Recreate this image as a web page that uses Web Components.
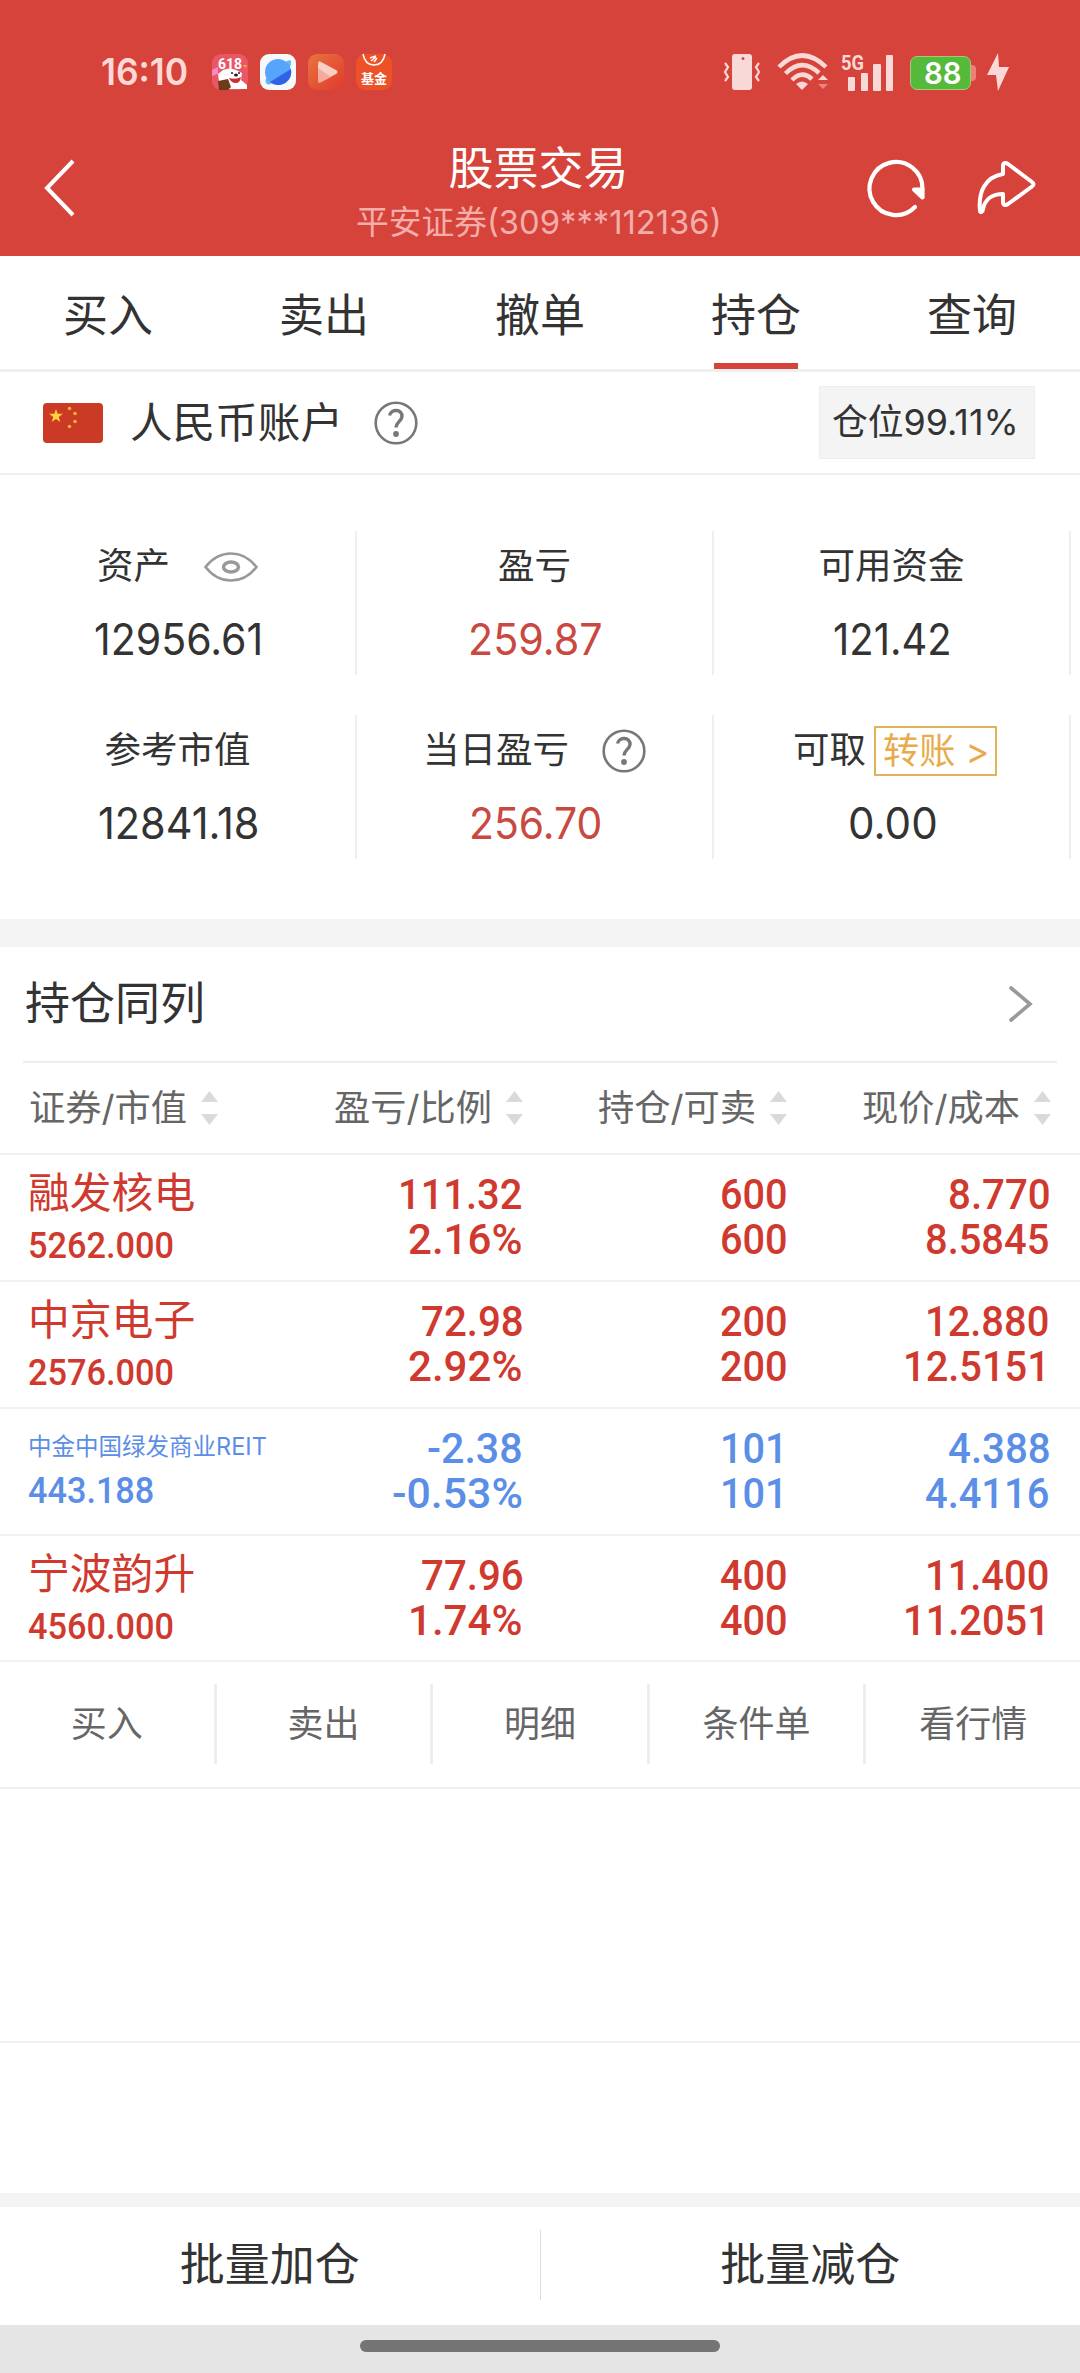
<!DOCTYPE html>
<html lang="zh-CN">
<head>
<meta charset="utf-8">
<title>股票交易</title>
<style>
  body {
    margin: 0;
    background: #fff;
    color: #333;
    font-family: Inter, "Noto Sans CJK SC", sans-serif;
  }
</style>
</head>
<body>
<trade-app></trade-app>

<script>
const define = (name, html, init) => {
  const template = document.createElement('template');
  template.innerHTML = html;
  customElements.define(name, class extends HTMLElement {
    constructor() {
      super();
      this.attachShadow({ mode: 'open' });
      this.shadowRoot.appendChild(template.content.cloneNode(true));
    }

    connectedCallback() {
      if (init) init(this, this.shadowRoot);
    }
  });
};

const ICONS = {
  back: [36, 60, '<path d="M31 3 5 30l26 27" fill="none" stroke="#fff" stroke-width="4"/>'],
  refresh: [60, 60, `<g fill="none" stroke="#fff" stroke-width="4.2" stroke-linecap="round" stroke-linejoin="round">
    <path d="M49 49A26.5 26.5 0 1 1 56.500 31"/><path d="M48 31.500h8.500v8z" fill="#fff"/></g>`],
  share: [62, 56, `<path d="M5 51C3 32 10 17 28 14V6c0-3 2-4 5-2l24 18c2 1.500 2 3 0 4.500L33 44c-3 2-5 1-5-2v-8C18 34 10 39 8 49c0 3-3 4-3 2z"
    fill="none" stroke="#fff" stroke-width="4" stroke-linejoin="round"/>`],
  vibrate: [37, 36, `<path fill="#f9d9d7" fill-rule="evenodd" d="M11 0h14q3 0 3 3v30q0 3-3 3H11q-3 0-3-3V3q0-3 3-3zm8 3a1.500 1.500 0 1 0 0 3a1.500 1.500 0 1 0 0-3z"/>
    <path d="M1 9l3 4-3 5 3 5-3 4M35 9l-3 4 3 5-3 5 3 4" fill="none" stroke="#f9d9d7" stroke-width="2.200"/>`],
  wifi: [52, 36, `<g fill="none" stroke="#f9d9d7" stroke-width="4.500"><path d="M2 13Q25-10 49 13"/><path d="M8.500 19.500Q25 3 42 19"/><path d="M15 26Q25 16 35 25"/></g>
    <path d="M19 30q6-5 12 0l-6 6z" fill="#f9d9d7"/><path d="M41 26l5-5 5 5z" fill="#f9d9d7"/><path d="M41 30h10l-5 5z" fill="#e78680"/>`],
  bars: [52, 37, `<text x="-1" y="15.500" font-size="21" font-weight="700" font-family="Roboto" textLength="23" lengthAdjust="spacingAndGlyphs">5G</text>
    <rect x="6" y="23" width="7" height="14" rx="1"/><rect x="19" y="19" width="7" height="18" rx="1"/><rect x="31" y="10" width="8" height="27" rx="1"/><rect x="44" y="1" width="7" height="36" rx="1"/>`],
  bolt: [22, 38, '<path d="M11 0L0 22h9l2 16 11-24H12z" fill="#f9d9d7"/>'],
  promo: [36, 36, `<rect width="36" height="36" rx="9" fill="#e95766"/><path d="M0 16l6-3v7l-6 2z" fill="#f68ac0"/>
    <text x="6" y="14.500" font-size="15.500" font-weight="700" font-family="Roboto" fill="#fff" textLength="24" lengthAdjust="spacingAndGlyphs">618</text>
    <path d="M6 20l5-4q7-3 13 0l6 3-1 7 6 5v4H8z" fill="#fff"/><circle cx="20" cy="19" r="1" fill="#222"/><circle cx="27" cy="19" r="1" fill="#222"/>
    <ellipse cx="24" cy="21" rx="2" ry="1.500" fill="#222"/><path d="M17 24q7 2 12-1-1 6-5 6-5 0-7-5z" fill="#c92f35"/>
    <path d="M6 27l10-2 3 8-3 3H7z" fill="#6e3a1a"/><path d="M31 11l4 0-2 3z" fill="#f5ab3f"/>`],
  planet: [36, 36, `<rect width="36" height="36" rx="9" fill="#f7f8fa"/><path d="M6 29q-2-4 3-8L27 7q5-2 4 2 0 4-4 7L12 29q-4 3-6 0z" fill="#68b7f5"/>
    <circle cx="18" cy="18" r="13" fill="#55a5fb"/><path d="M10 28 31 15a13 13 0 0 1-21 13z" fill="#2f62e4"/>`],
  play: [36, 36, `<defs><linearGradient id="g" x2="1" y2="1"><stop stop-color="#e8743e"/><stop offset="1" stop-color="#e03a2c"/></linearGradient></defs>
    <rect width="36" height="36" rx="9" fill="url(#g)"/><path d="M10 10q0-4 3-2l15 8q3 2 0 4l-15 8q-3 2-3-2z" fill="#fbd0c4"/><path d="M10 14l13 9-10 5q-3 2-3-2z" fill="#f5aa9b"/>`],
  fund: [36, 36, `<rect width="36" height="36" rx="9" fill="#ec5127"/><g fill="none" stroke="#fff" stroke-width="1.500"><path d="M7 0q2 11 11 11T29 0"/><path d="M14 4l6-2m-5 5 5-4m-2 5 3-4"/></g>
    <text x="5" y="28.500" font-size="13" font-weight="700" font-family="Noto Sans CJK SC" fill="#fff">基金</text>`],
  flag: [60, 40, `<rect width="60" height="40" rx="4" fill="#cb3a25"/><path d="M13 6l1.600 4.800H20l-4.300 3.100 1.600 5L13 16l-4.300 2.900 1.600-5L6 10.800h5.400z" fill="#fbd13d"/>
    <g fill="#eeb03c"><circle cx="26.500" cy="5.500" r="1.800"/><circle cx="32" cy="10.500" r="1.800"/><circle cx="32" cy="18.500" r="1.800"/><circle cx="26.500" cy="23.500" r="1.800"/></g>`],
  help: [44, 44, `<g fill="none" stroke="#777"><circle cx="22" cy="22" r="20.300" stroke-width="2.600"/>
    <path d="M15.500 14.500C17 7.500 28.500 8 28 15.500c-.5 5-6 5.500-6 11" stroke-width="3.400"/></g><circle cx="22" cy="33" r="2.900" fill="#777"/>`],
  eye: [54, 30, `<g fill="none" stroke="#999"><path d="M1.500 15Q12 1.500 27 1.500T52.500 15Q42 28.500 27 28.500T1.500 15z" stroke-width="2.600"/>
    <ellipse cx="27" cy="15" rx="7.500" ry="5" stroke-width="3.400"/></g>`],
  next: [24, 38, '<path d="M2 3l19 16L2 35" fill="none" stroke="#999" stroke-width="3.600" stroke-linecap="round"/>'],
  sort: [17, 34, '<path d="M8.500 0 17 11H0zM0 23h17L8.500 34z" fill="#dadada"/>'],
};

define('app-icon', '<style>:host{display:block;flex:none}svg{display:block;overflow:visible}</style><div></div>', (el, root) => {
  const [w, h, body] = ICONS[el.getAttribute('name')];
  root.querySelector('div').innerHTML = `<svg width="${w}" height="${h}" viewBox="0 0 ${w} ${h}" fill="#f9d9d7">${body}</svg>`;
});

// stretches its text to the given advance width
define('fit-text', `
<style>
  :host { display: inline-block; white-space: nowrap; text-align: left; }
  span { display: inline-block; transform-origin: 0 50%; }
</style>
<span><slot></slot></span>`, (el, root) => {
  const width = Number(el.getAttribute('width'));
  const span = root.querySelector('span');
  el.style.width = `${width}px`;
  span.style.transform = `scaleX(${width / span.offsetWidth})`;
});

define('status-bar', `
<style>
  :host { display: flex; align-items: center; height: 144px; box-sizing: border-box; padding: 0 71px 0 101px; color: #fdd9d6; }
  .time { font-size: 37px; font-weight: 600; line-height: 40px; margin-right: 24px; }
  .apps { display: flex; gap: 12px; flex: 1; }
  .system { display: flex; align-items: center; }
  .battery { display: flex; align-items: center; margin: 2px 11px 0 16px; }
  .level { box-sizing: border-box; width: 61px; height: 34px; border: 1px solid #a8c879; border-radius: 7px; background: #55b93a;
    color: #fff; font: 600 30px/32px Inter; text-align: center; padding-left: 3px; }
  .tip { width: 5px; height: 16px; border-radius: 0 4px 4px 0; background: #ee7f78; }
</style>
<fit-text class="time" width="87">16:10</fit-text>
<div class="apps">
  <app-icon name="promo"></app-icon><app-icon name="planet"></app-icon><app-icon name="play"></app-icon><app-icon name="fund"></app-icon>
</div>
<div class="system">
  <app-icon name="vibrate" style="margin-right:16px"></app-icon>
  <app-icon name="wifi" style="margin-right:13px"></app-icon>
  <app-icon name="bars"></app-icon>
  <div class="battery"><div class="level"><fit-text width="37">88</fit-text></div><div class="tip"></div></div>
  <app-icon name="bolt"></app-icon>
</div>`);

define('title-bar', `
<style>
  :host { display: flex; align-items: center; height: 112px; box-sizing: border-box; padding: 0 43px 24px 42px; color: #fff; }
  .title { flex: 1; text-align: center; padding: 13px 0 0 133px; }
  h1 { margin: 0; font-weight: 400; font-size: 45px; line-height: 54px; }
  p { margin: 0; font-size: 33px; line-height: 52px; color: #f3aeaa; }
  .actions { display: flex; align-items: center; gap: 49px; }
</style>
<app-icon name="back"></app-icon>
<div class="title"><h1>股票交易</h1><p><fit-text width="366">平安证券(309***112136)</fit-text></p></div>
<div class="actions"><app-icon name="refresh"></app-icon><app-icon name="share"></app-icon></div>`);

define('tab-item', `
<style>
  :host { display: flex; flex: 1; flex-direction: column; align-items: center; font-size: 45px; line-height: 107px; padding-top: 6px; box-sizing: border-box; }
  i { width: 84px; height: 6px; margin-top: -6px; }
  :host([active]) i { background: #d6433b; }
</style>
<slot></slot><i></i>`);

define('account-bar', `
<style>
  :host { display: flex; align-items: center; height: 103px; box-sizing: border-box; padding: 0 45px 0 43px; border-bottom: 2px solid #efefef; }
  .name { font-size: 42px; line-height: 60px; margin: 0 31px 0 27px; }
  .ratio { margin-left: auto; box-sizing: border-box; width: 216px; height: 73px; border: 1px solid #ededed; background: #f4f4f4;
    font-size: 36px; line-height: 71px; padding-left: 12px; }
</style>
<app-icon name="flag"></app-icon>
<fit-text class="name" width="213">人民币账户</fit-text>
<app-icon name="help"></app-icon>
<div class="ratio"><fit-text width="187">仓位99.11%</fit-text></div>`);

define('stat-cell', `
<style>
  :host { display: block; height: 144px; text-align: center; border-right: 2px solid #efefef; box-sizing: border-box; }
  .label { display: flex; justify-content: center; align-items: center; height: 71px; font-size: 36.500px; line-height: 71px; }
  .value { font-size: 44px; line-height: 75px; padding-left: 2px; }
  :host([up]) .value { color: #c9483f; }
</style>
<div class="label"><slot name="label"></slot></div>
<div class="value"><slot></slot></div>`);

define('sort-head', `
<style>
  :host { display: flex; align-items: center; justify-content: flex-end; gap: 14px; font-size: 36px; line-height: 60px; color: #666; }
</style>
<fit-text width="158"><slot></slot></fit-text><app-icon name="sort"></app-icon>`, (el, root) => {
  const fit = root.querySelector('fit-text');
  fit.connectedCallback();
});

const ADVANCE = { '.': 12.7, '-': 16, '%': 35 };
const number = (text, scale = 1) => {
  const width = [...text].reduce((sum, c) => sum + (ADVANCE[c] || 22.4), 0) * scale;
  return `<fit-text width="${width.toFixed(1)}">${text}</fit-text>`;
};

define('holding-row', `
<style>
  :host { display: grid; grid-template-columns: 267px 256px 264px 263px; height: 127px; box-sizing: border-box;
    border-bottom: 2px solid #f1f1f1; color: #d0392e; font-family: Roboto, sans-serif; font-weight: 500; }
  :host([down]) { color: #5b8ee6; }
  .stock { padding: 11px 0 0 28px; white-space: nowrap; }
  .name { font: 400 41.800px/54px Inter, "Noto Sans CJK SC", sans-serif; }
  .market { font-size: 36px; line-height: 52px; }
  .small .name { font-size: 24px; line-height: 54px; }
  .small .market { line-height: 34px; }
  .pair { padding-top: 17px; text-align: right; font-size: 42.500px; line-height: 45px; }
  .pair div { height: 45px; }
</style>`, (el, root) => {
  const [name, market, ...cells] = el.getAttribute('data').split('|');
  const small = name.length > 6;
  let html = `<div class="stock ${small ? 'small' : ''}">
    <div class="name">${small ? `<fit-text width="239">${name}</fit-text>` : name}</div>
    <div class="market">${number(market, 0.86)}</div></div>`;
  for (let i = 0; i < cells.length; i += 2) {
    html += `<div class="pair"><div>${number(cells[i])}</div><div>${number(cells[i + 1])}</div></div>`;
  }
  root.innerHTML += html;
});

define('action-bar', `
<style>
  :host { display: flex; height: 127px; box-sizing: border-box; padding: 22px 0 23px; border-bottom: 2px solid #f1f1f1; color: #666;
    font-size: 36px; line-height: 80px; overflow: hidden; }
  ::slotted(span) { flex: 0 0 216.600px; text-align: center; border-right: 3px solid #eee; height: 80px; box-sizing: border-box; }
</style>
<slot></slot>`);

define('bottom-bar', `
<style>
  :host { display: block; }
  .buttons { display: flex; align-items: center; height: 118px; border-top: 14px solid #f4f4f4; font-size: 45px; line-height: 70px; }
  .buttons span { flex: 1; text-align: center; height: 70px; margin-bottom: 2px; }
  .buttons i { width: 1px; height: 70px; background: #ddd; margin-top: -3px; }
  .home { display: flex; justify-content: center; height: 48px; background: #e5e5e5; }
  .home i { width: 360px; height: 12px; margin-top: 15px; border-radius: 6px; background: #747474; }
</style>
<div class="buttons"><span>批量加仓</span><i></i><span>批量减仓</span></div>
<div class="home"><i></i></div>`);

define('trade-app', `
<style>
  :host { display: flex; flex-direction: column; width: 1080px; height: 2373px; overflow: hidden; }
  header { height: 256px; background: #d6433b; }
  nav { display: flex; height: 113px; border-bottom: 3px solid #eee; }
  .stats { display: grid; grid-template-columns: 357px 357px 357px; row-gap: 40px; height: 328px; padding: 56px 0 60px; border-bottom: 28px solid #f4f4f4; }
  .transfer { box-sizing: border-box; width: 123px; height: 50px; margin-left: 8px; border: 2px solid #dfb458; color: #e8ab4c; line-height: 46px; }
  h2 { display: flex; align-items: center; justify-content: space-between; height: 114px; margin: 0 23px; padding: 0 24px 0 2px; box-sizing: border-box;
    font-size: 45px; font-weight: 400; line-height: 60px; }
  hr { width: 1034px; height: 2px; margin: 0 23px; border: 0; background: #eee; }
  .heads { display: grid; grid-template-columns: 218px 305px 264px 264px; height: 92px; box-sizing: border-box; border-bottom: 2px solid #f0f0f0; }
  .blank { height: 252px; border-bottom: 2px solid #f1f1f1; }
  bottom-bar { margin-top: auto; }
</style>
<header><status-bar></status-bar><title-bar></title-bar></header>
<nav>
  <tab-item>买入</tab-item><tab-item>卖出</tab-item><tab-item>撤单</tab-item><tab-item active>持仓</tab-item><tab-item>查询</tab-item>
</nav>
<account-bar></account-bar>
<div class="stats">
  <stat-cell><span slot="label">资产</span><app-icon slot="label" name="eye" style="margin-left:34px"></app-icon><fit-text width="169">12956.61</fit-text></stat-cell>
  <stat-cell up><span slot="label">盈亏</span><fit-text width="135">259.87</fit-text></stat-cell>
  <stat-cell><span slot="label">可用资金</span><fit-text width="119">121.42</fit-text></stat-cell>
  <stat-cell><span slot="label">参考市值</span><fit-text width="161">12841.18</fit-text></stat-cell>
  <stat-cell up><span slot="label">当日盈亏</span><app-icon slot="label" name="help" style="margin-left:33px"></app-icon><fit-text width="133">256.70</fit-text></stat-cell>
  <stat-cell><span slot="label" style="margin-left:7px">可取</span><div slot="label" class="transfer"><fit-text width="106">转账 &gt;</fit-text></div><fit-text width="90">0.00</fit-text></stat-cell>
</div>
<h2>持仓同列<app-icon name="next"></app-icon></h2>
<hr>
<div class="heads">
  <sort-head>证券/市值</sort-head><sort-head>盈亏/比例</sort-head><sort-head>持仓/可卖</sort-head><sort-head>现价/成本</sort-head>
</div>
<holding-row data="融发核电|5262.000|111.32|2.16%|600|600|8.770|8.5845"></holding-row>
<holding-row data="中京电子|2576.000|72.98|2.92%|200|200|12.880|12.5151"></holding-row>
<holding-row down data="中金中国绿发商业REIT|443.188|-2.38|-0.53%|101|101|4.388|4.4116"></holding-row>
<holding-row style="height:126px" data="宁波韵升|4560.000|77.96|1.74%|400|400|11.400|11.2051"></holding-row>
<action-bar><span>买入</span><span>卖出</span><span>明细</span><span>条件单</span><span>看行情</span></action-bar>
<div class="blank"></div>
<bottom-bar></bottom-bar>`);
</script>
</body>
</html>
